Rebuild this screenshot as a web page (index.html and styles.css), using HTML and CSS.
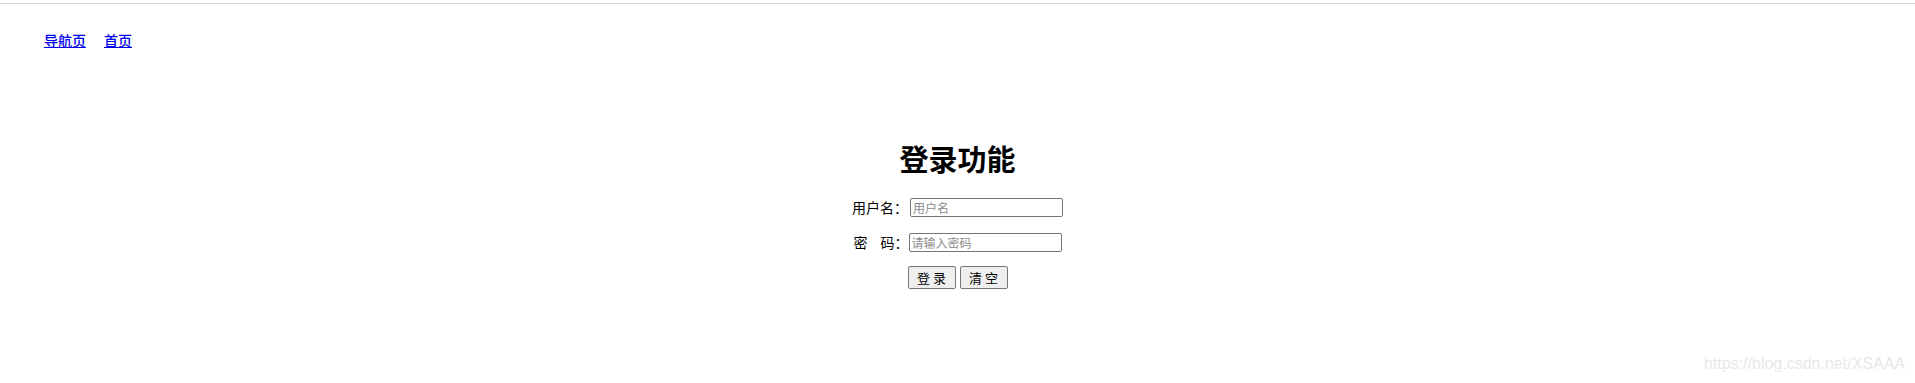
FILE: index.html
```html
<!DOCTYPE html>
<html lang="zh-CN">
<head>
<meta charset="utf-8">
<title>登录功能</title>
<link rel="stylesheet" href="styles.css">
</head>
<body>
<div class="topline"></div>
<nav class="nav">
  <a href="#">导航页</a>
  <a href="#">首页</a>
</nav>
<main class="login">
  <h2 class="title">登录功能</h2>
  <form class="form">
    <div class="row">
      <label class="label label-user">用户名：</label>
      <input class="field" type="text" placeholder="用户名">
    </div>
    <div class="row">
      <label class="label label-pass"><span>密</span><span class="sp"></span><span>码：</span></label>
      <input class="field" type="password" placeholder="请输入密码">
    </div>
    <div class="row buttons">
      <button class="btn" type="button">登 录</button>
      <button class="btn" type="reset">清 空</button>
    </div>
  </form>
</main>
<div class="watermark">https://blog.csdn.net/XSAAA</div>
</body>
</html>
```
FILE: styles.css
```css
html, body {
  margin: 0;
  padding: 0;
  background: #ffffff;
  height: 383px;
  overflow: hidden;
}
body {
  font-family: "Noto Sans CJK SC", "Liberation Sans", sans-serif;
  color: #000;
  position: relative;
}
.topline {
  height: 3px;
  border-bottom: 1px solid #d9d9d9;
}
.nav {
  margin-top: 26px;
  padding-left: 44px;
  display: flex;
  gap: 18px;
  font-size: 14px;
  line-height: 20px;
}
.nav a {
  color: #0000ee;
  text-decoration: underline;
  font-weight: 500;
}
.login {
  display: flex;
  flex-direction: column;
  align-items: center;
}
.title {
  margin: 88px 0 0 0;
  font-size: 29px;
  line-height: 40px;
  font-weight: 700;
}
.form {
  display: flex;
  flex-direction: column;
  align-items: center;
  margin-top: 20px;
  gap: 16px;
}
.row {
  display: flex;
  align-items: center;
  height: 19px;
}
.label {
  font-size: 14px;
  line-height: 19px;
  display: flex;
  white-space: nowrap;
}
.label-user {
  width: 58px;
}
.label-pass {
  width: 55px;
}
.sp {
  width: 13px;
}
.field {
  box-sizing: border-box;
  width: 153px;
  height: 19px;
  border: 1px solid #767676;
  border-radius: 2px;
  padding: 0 2px;
  font-family: "Noto Sans CJK SC", "Liberation Sans", sans-serif;
  font-size: 12px;
  background: #fff;
}
.field::placeholder {
  color: #8a8a8a;
}
.buttons {
  height: 23px;
  gap: 4px;
  margin-top: -2px;
}
.btn {
  box-sizing: border-box;
  width: 48px;
  height: 23px;
  padding: 0;
  border: 1px solid #767676;
  border-radius: 2px;
  background: #efefef;
  font-family: "Noto Sans CJK SC", "Liberation Sans", sans-serif;
  font-size: 13px;
  line-height: 20px;
  color: #000;
}
.watermark {
  position: absolute;
  right: 10px;
  top: 353px;
  font-family: "Liberation Sans", Arial, sans-serif;
  font-size: 16px;
  line-height: 22px;
  color: #e8e8e8;
}
```
